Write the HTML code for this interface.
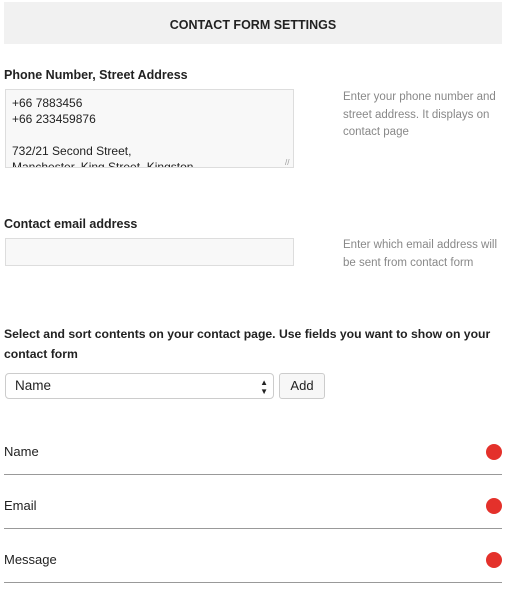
<!DOCTYPE html>
<html><head><style>
body{margin:0;width:510px;height:589px;background:#fff;font-family:"Liberation Sans",sans-serif;color:#222;position:relative;overflow:hidden}
.a{position:absolute}
.help{font-size:11.5px;color:#888;line-height:17.5px}
.lbl{font-size:12.5px;font-weight:bold;color:#222}
.row{position:absolute;left:4px;width:498px;height:54px;border-bottom:1px solid #999}
.row span{position:absolute;left:0;top:24px;font-size:13px}
.dot{position:absolute;right:0;top:24px;width:16px;height:16px;border-radius:50%;background:#e4312b}
</style></head><body>
<div class="a" style="left:4px;top:2px;width:498px;height:42px;background:#f1f1f1;text-align:center;line-height:46px;font-size:12.5px;font-weight:bold">CONTACT FORM SETTINGS</div>
<div class="a lbl" style="left:4px;top:68px">Phone Number, Street Address</div>
<div class="a" style="left:5px;top:89px;border:1px solid #ddd;background:#f8f8f8;overflow:hidden;font-size:12px;line-height:16px;padding:0 0 0 6px;box-sizing:border-box;width:289px;height:79px">
<div style="padding-top:5px">+66 7883456<br>+66 233459876<br><br>732/21 Second Street,<br>Manchester, King Street, Kingston</div></div>
<div class="a" style="left:285px;top:158px;font-size:8px;color:#999">//</div>
<div class="a help" style="left:343px;top:89px">Enter your phone number and<br>street address. It displays on<br>contact page</div>
<div class="a lbl" style="left:4px;top:217px">Contact email address</div>
<div class="a" style="left:5px;top:238px;width:289px;height:28px;border:1px solid #ddd;background:#f8f8f8;box-sizing:border-box"></div>
<div class="a help" style="left:343px;top:237px">Enter which email address will<br>be sent from contact form</div>
<div class="a lbl" style="left:4px;top:324px;line-height:20px;width:506px;font-size:12.2px">Select and sort contents on your contact page. Use fields you want to show on your contact form</div>
<div class="a" style="left:5px;top:373px;width:269px;height:26px;border:1px solid #ccc;border-radius:4px;box-sizing:border-box;font-size:13.5px;line-height:24px;padding-left:9px">Name<span style="position:absolute;right:5px;font-size:8px;line-height:9px;top:4px">▲<br>▼</span></div>
<div class="a" style="left:279px;top:373px;width:46px;height:26px;border:1px solid #ccc;border-radius:3px;box-sizing:border-box;background:#f7f7f7;font-size:13px;line-height:24px;text-align:center">Add</div>
<div class="row" style="top:420px"><span>Name</span><div class="dot"></div></div>
<div class="row" style="top:474px"><span>Email</span><div class="dot"></div></div>
<div class="row" style="top:528px"><span>Message</span><div class="dot"></div></div>
</body></html>
